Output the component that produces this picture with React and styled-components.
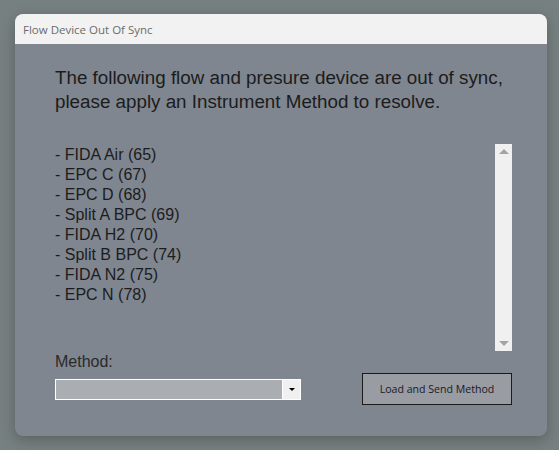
import React from "react";
import styled, { createGlobalStyle } from "styled-components";

const Global = createGlobalStyle`
  html, body { margin: 0; padding: 0; }
  body { background: #778080; width: 559px; height: 450px; overflow: hidden; }
`;

const Page = styled.div`
  width: 559px;
  height: 450px;
  box-sizing: border-box;
  padding: 14px 12px 14px 15px;
  background: #778080;
`;

const Window = styled.div`
  width: 532px;
  height: 422px;
  border-radius: 8px;
  overflow: hidden;
  display: flex;
  flex-direction: column;
  background: #7f8690;
  box-shadow: 0 4px 14px rgba(0, 0, 0, 0.25);
`;

const TitleBar = styled.div`
  height: 30px;
  flex: none;
  background: #f2f2f2;
  display: flex;
  align-items: center;
  padding-left: 8px;
  font-family: "Open Sans", "Noto Sans", sans-serif;
  font-size: 11.5px;
  color: #6b6b6b;
`;

const Body = styled.div`
  flex: 1;
  padding: 22px 35px 0 40px;
  display: flex;
  flex-direction: column;
  font-family: "Liberation Sans", Arial, sans-serif;
  color: #1c1c1c;
`;

const Heading = styled.div`
  font-size: 18.8px;
  line-height: 24px;
`;

const ListArea = styled.div`
  margin-top: 30px;
  height: 207px;
  display: flex;
  justify-content: space-between;
`;

const List = styled.div`
  padding-top: 1px;
  font-size: 16px;
  line-height: 20px;
`;

const Scrollbar = styled.div`
  width: 17px;
  background: #f0f0f0;
  display: flex;
  flex-direction: column;
  justify-content: space-between;
  align-items: center;
  padding: 5px 0;
  box-sizing: border-box;
`;

const Arrow = styled.div`
  width: 0;
  height: 0;
  border-left: 5px solid transparent;
  border-right: 5px solid transparent;
  ${(p) =>
    p.up
      ? "border-bottom: 5px solid #a3a3a3;"
      : "border-top: 5px solid #a3a3a3;"}
`;

const Bottom = styled.div`
  margin-top: 1px;
  display: flex;
  justify-content: space-between;
  align-items: flex-start;
`;

const MethodCol = styled.div`
  display: flex;
  flex-direction: column;
`;

const Label = styled.div`
  font-size: 16px;
  line-height: 20px;
  color: #2a2a2a;
`;

const Combo = styled.div`
  margin-top: 7px;
  width: 246px;
  height: 21px;
  box-sizing: border-box;
  border: 1px solid #ffffff;
  background: #aaadb2;
  display: flex;
  justify-content: flex-end;
`;

const DropBtn = styled.div`
  width: 17px;
  border-left: 1px solid #ffffff;
  background: #f0f0f0;
  display: flex;
  align-items: center;
  justify-content: center;
`;

const SmallArrow = styled.div`
  width: 0;
  height: 0;
  border-left: 3px solid transparent;
  border-right: 3px solid transparent;
  border-top: 3px solid #000;
`;

const Button = styled.div`
  margin-top: 21px;
  width: 150px;
  height: 32px;
  box-sizing: border-box;
  border: 1px solid #1a1a1a;
  background: #999ca2;
  display: flex;
  align-items: center;
  justify-content: center;
  font-family: "Open Sans", "Noto Sans", sans-serif;
  font-size: 10.6px;
  color: #1a1a26;
`;

const items = [
  "- FIDA Air (65)",
  "- EPC C (67)",
  "- EPC D (68)",
  "- Split A BPC (69)",
  "- FIDA H2 (70)",
  "- Split B BPC (74)",
  "- FIDA N2 (75)",
  "- EPC N (78)",
];

export default function App() {
  return (
    <Page>
      <Global />
      <Window>
        <TitleBar>Flow Device Out Of Sync</TitleBar>
        <Body>
          <Heading>
            The following flow and presure device are out of sync,
            <br />
            please apply an Instrument Method to resolve.
          </Heading>
          <ListArea>
            <List>
              {items.map((t) => (
                <div key={t}>{t}</div>
              ))}
            </List>
            <Scrollbar>
              <Arrow up />
              <Arrow />
            </Scrollbar>
          </ListArea>
          <Bottom>
            <MethodCol>
              <Label>Method:</Label>
              <Combo>
                <DropBtn>
                  <SmallArrow />
                </DropBtn>
              </Combo>
            </MethodCol>
            <Button>Load and Send Method</Button>
          </Bottom>
        </Body>
      </Window>
    </Page>
  );
}
